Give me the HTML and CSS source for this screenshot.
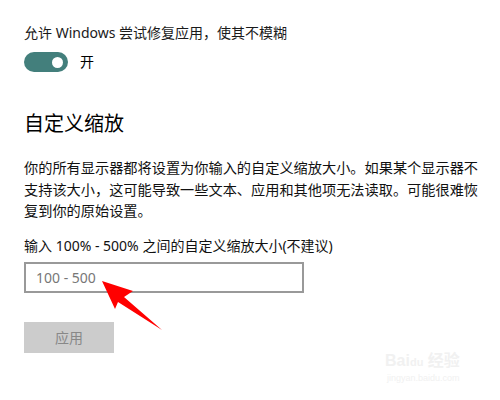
FILE: index.html
```html
<!DOCTYPE html>
<html lang="zh-CN">
<head>
    <meta charset="UTF-8">
    <title>自定义缩放</title>
    <link rel="stylesheet" href="styles.css">
</head>
<body>
    <div class="pagina">
        <p class="opcion">允许 Windows 尝试修复应用，使其不模糊</p>
        <div class="fila-toggle">
            <span class="toggle"><span class="perilla"></span></span>
            <span class="estado">开</span>
        </div>

        <h2 class="titulo">自定义缩放</h2>
        <p class="descripcion">你的所有显示器都将设置为你输入的自定义缩放大小。如果某个显示器不支持该大小，这可能导致一些文本、应用和其他项无法读取。可能很难恢复到你的原始设置。</p>

        <label class="etiqueta" for="escala">输入 100% - 500% 之间的自定义缩放大小(不建议)</label>
        <input class="campo" id="escala" type="text" placeholder="100 - 500">
        <button class="boton" disabled>应用</button>
    </div>

    <!-- flecha roja sobre el campo -->
    <svg class="flecha" width="80" height="70" viewBox="90 270 80 70">
        <polygon points="102,281 133,291 124,297 162,330 118,302 115,309" fill="#ff0000"/>
    </svg>

    <div class="marca">
        <span class="marca-logo">Bai<b>du</b> 经验</span>
        <span class="marca-url">jingyan.baidu.com</span>
    </div>
</body>
</html>
```

FILE: styles.css
```css
body {
    margin: 0;
    background: #ffffff;
    color: #000000;
    font-family: "Noto Sans", "Noto Sans CJK SC", sans-serif;
    width: 500px;
    height: 400px;
    overflow: hidden;
    position: relative;
}

.pagina {
    padding: 23px 0 0 24px;
    display: flex;
    flex-direction: column;
    align-items: flex-start;
}

.opcion {
    margin: 0;
    font-size: 14px;
    line-height: 20px;
    color: #1a1a1a;
}

.fila-toggle {
    margin-top: 9px;
    display: flex;
    align-items: center;
    gap: 12px;
}

.toggle {
    width: 44px;
    height: 20px;
    border-radius: 10px;
    background: #437f7c;
    position: relative;
    display: block;
}

.perilla {
    position: absolute;
    width: 11px;
    height: 11px;
    border-radius: 50%;
    background: #ffffff;
    top: 4.5px;
    right: 5px;
}

.estado {
    font-size: 14px;
    line-height: 20px;
}

.titulo {
    margin: 38px 0 0;
    font-size: 20px;
    font-weight: normal;
    line-height: 28px;
}

.descripcion {
    margin: 19px 0 0;
    width: 460px;
    font-size: 14.2px;
    line-height: 21.5px;
    color: #111;
}

.etiqueta {
    margin-top: 14px;
    font-size: 14px;
    line-height: 20px;
    color: #111;
}

.campo {
    margin-top: 6px;
    box-sizing: border-box;
    width: 280px;
    height: 31px;
    border: 2px solid #999999;
    padding: 0 10px;
    font-family: inherit;
    font-size: 14px;
    outline: none;
}

.campo::placeholder {
    color: #777777;
}

.boton {
    margin-top: 29px;
    width: 90px;
    height: 31px;
    border: none;
    background: #cccccc;
    color: #888888;
    font-family: inherit;
    font-size: 14px;
}

.flecha {
    position: absolute;
    left: 90px;
    top: 270px;
}

.marca {
    position: absolute;
    left: 385px;
    top: 352px;
    display: flex;
    flex-direction: column;
    color: #f1f1f1;
    font-family: "Liberation Sans", "Noto Sans CJK SC", sans-serif;
}

.marca-logo {
    font-size: 16px;
    font-weight: bold;
    line-height: 18px;
}

.marca-logo b {
    font-size: 11px;
}

.marca-url {
    font-size: 9px;
    line-height: 14px;
    margin-left: 2px;
}
```
